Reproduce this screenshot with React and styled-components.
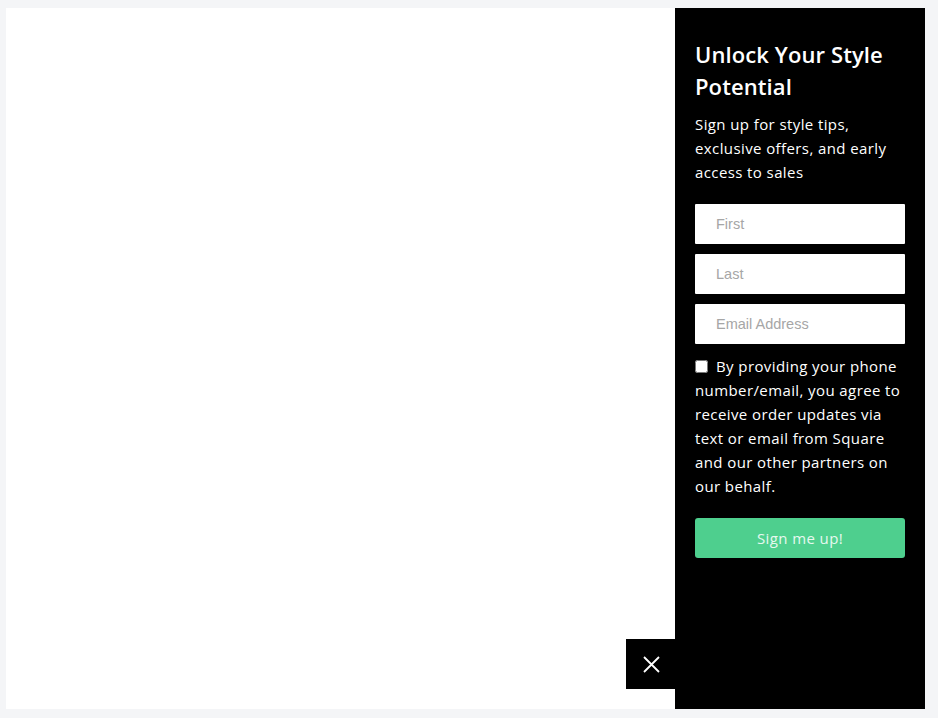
import React from "react";
import styled, { createGlobalStyle } from "styled-components";

const GlobalStyle = createGlobalStyle`
  html, body {
    margin: 0;
    padding: 0;
    background: #f4f5f7;
  }
  * {
    box-sizing: border-box;
  }
`;

const Page = styled.div`
  display: flex;
  height: 718px;
  padding: 8px 13px 9px 6px;
  font-family: "Open Sans", sans-serif;
`;

const Canvas = styled.div`
  flex: 1;
  background: #ffffff;
`;

const Panel = styled.aside`
  position: relative;
  width: 250px;
  background: #000000;
  color: #ffffff;
  padding: 30px 20px 20px;
  .title {
    font-size: 22px;
    font-weight: 600;
    line-height: 32px;
    letter-spacing: 0.1px;
    margin: 0 0 10px;
  }
  .text {
    font-size: 15px;
    line-height: 24px;
    letter-spacing: 0.4px;
    margin: 0 0 20px;
  }
`;

const Form = styled.form`
  display: flex;
  flex-direction: column;
  gap: 10px;
`;

const Input = styled.input`
  height: 40px;
  width: 100%;
  border: none;
  border-radius: 1px;
  padding: 0 21px;
  font-family: "Liberation Sans", Arial, sans-serif;
  font-size: 14.5px;
  color: #333;
  outline: none;
  &::placeholder {
    color: #a6a6a6;
  }
`;

const Consent = styled.label`
  display: block;
  font-size: 15px;
  line-height: 24px;
  letter-spacing: 0.4px;
  input {
    width: 13px;
    height: 13px;
    margin: 0 8px 0 0;
    vertical-align: -1px;
    accent-color: #ffffff;
  }
`;

const Submit = styled.button`
  margin-top: 10px;
  height: 40px;
  width: 100%;
  border: none;
  border-radius: 3px;
  background: #4ecf8e;
  color: #e6f8ee;
  font-family: inherit;
  font-size: 15px;
  letter-spacing: 0.4px;
  cursor: pointer;
`;

const Close = styled.button`
  position: absolute;
  left: -49px;
  bottom: 20px;
  width: 50px;
  height: 50px;
  border: none;
  background: #000000;
  display: flex;
  align-items: center;
  justify-content: center;
  cursor: pointer;
`;

const App = () => {
  return (
    <>
      <GlobalStyle />
      <Page>
        <Canvas />
        <Panel>
          <h2 className="title">Unlock Your Style Potential</h2>
          <p className="text">
            Sign up for style tips, exclusive offers, and early access to sales
          </p>
          <Form onSubmit={e => e.preventDefault()}>
            <Input placeholder="First" />
            <Input placeholder="Last" />
            <Input placeholder="Email Address" />
            <Consent>
              <input type="checkbox" />
              By providing your phone number/email, you agree to receive order
              updates via text or email from Square and our other partners on
              our behalf.
            </Consent>
            <Submit type="submit">Sign me up!</Submit>
          </Form>
          <Close aria-label="Close">
            <svg width="17" height="17" viewBox="0 0 17 17">
              <path
                d="M1 1 L16 16 M16 1 L1 16"
                stroke="#fff"
                strokeWidth="1.8"
                fill="none"
              />
            </svg>
          </Close>
        </Panel>
      </Page>
    </>
  );
};

export default App;
